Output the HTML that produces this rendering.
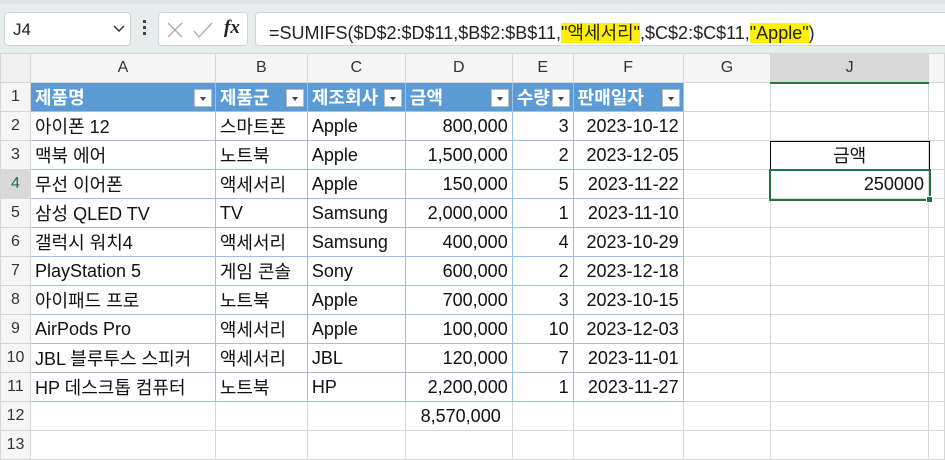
<!DOCTYPE html><html><head><meta charset="utf-8"><style>
*{margin:0;padding:0;box-sizing:border-box}
body{width:945px;height:445px;overflow:hidden;background:#fff;font-family:"Liberation Sans","Noto Sans CJK KR",sans-serif;position:relative}
.top{position:absolute;left:0;top:0;width:945px;height:54px;background:#e7ecec}
.top .strip{position:absolute;left:0;top:0;width:945px;height:4px;background:#dfe3e3}
.box{position:absolute;background:#fff;border:1px solid #d0d4d4;border-radius:4px}
table{position:absolute;left:0;top:53px;border-collapse:collapse;table-layout:fixed}
td{height:29px;border:1px solid #d6d6d6;font-size:18px;padding:0 4px;white-space:nowrap;overflow:hidden;color:#111}
tr.h td{background:#f5f5f5;text-align:center;color:#333;font-size:16px;border-color:#d6d6d6}
td.rh{background:#f5f5f5;text-align:center;color:#333;font-size:16px;padding:0}
td.r{text-align:right}
tr.t1 td.tb{background:#5b9bd5;color:#fff;font-weight:bold;border-color:#9bc2e6;position:relative}
td.tb{border-color:#9bc2e6}
.dd{position:absolute;right:3px;top:6px;width:18px;height:18px;background:#fff;border:1px solid #bbb}
.dd:after{content:"";position:absolute;left:5px;top:7px;border-left:3.5px solid transparent;border-right:3.5px solid transparent;border-top:4px solid #444}
</style></head><body>
<div class="top"><div class="strip"></div>
<div class="box" style="left:4px;top:12px;width:127px;height:34px"><span style="position:absolute;left:8px;top:7px;font-size:17px;color:#222">J4</span>
<svg style="position:absolute;left:108px;top:12px" width="12" height="8"><path d="M1 1 L6 6 L11 1" stroke="#333" stroke-width="1.5" fill="none"/></svg></div>
<div style="position:absolute;left:143px;top:20px;width:3px;height:3px;background:#444;box-shadow:0 6px #444,0 12px #444"></div>
<div class="box" style="left:158px;top:12px;width:90px;height:34px">
<svg style="position:absolute;left:8px;top:9px" width="70" height="18"><path d="M1 1 L15 15 M15 1 L1 15" stroke="#aaa" stroke-width="1.3"/><path d="M27 9 L32 15 L45 1" stroke="#aaa" stroke-width="1.3" fill="none"/></svg>
<span style="position:absolute;left:65px;top:4px;font-family:'Liberation Serif',serif;font-style:italic;font-weight:bold;font-size:19px;color:#222">fx</span></div>
<div class="box" style="left:255px;top:12px;width:700px;height:34px;border-radius:4px 0 0 4px"><span style="position:absolute;left:13px;top:6px;font-size:18px;color:#222;white-space:nowrap">=SUMIFS($D$2:$D$11,$B$2:$B$11,<span style="background:#ffef00">"액세서리"</span>,$C$2:$C$11,<span style="background:#ffef00">"Apple"</span>)</span></div>
</div>
<table>
<colgroup><col style="width:30px"><col style="width:185px"><col style="width:92px"><col style="width:98px"><col style="width:107px"><col style="width:61px"><col style="width:110px"><col style="width:88px"><col style="width:158px"><col style="width:16px"></colgroup>
<tr class="h"><td style="background:#f0f0f0"></td><td>A</td><td>B</td><td>C</td><td>D</td><td>E</td><td>F</td><td>G</td><td style="background:#d9d9d9;border-bottom:2px solid #217346">J</td><td></td></tr>
<tr class="t1"><td class="rh">1</td><td class="tb">제품명<span class="dd"></span></td><td class="tb">제품군<span class="dd"></span></td><td class="tb">제조회사<span class="dd"></span></td><td class="tb">금액<span class="dd"></span></td><td class="tb">수량<span class="dd"></span></td><td class="tb">판매일자<span class="dd"></span></td><td></td><td></td><td></td></tr>
<tr><td class="rh">2</td><td class="tb">아이폰 12</td><td class="tb">스마트폰</td><td class="tb">Apple</td><td class="tb r">800,000</td><td class="tb r">3</td><td class="tb r">2023-10-12</td><td></td><td></td><td></td></tr>
<tr><td class="rh">3</td><td class="tb">맥북 에어</td><td class="tb">노트북</td><td class="tb">Apple</td><td class="tb r">1,500,000</td><td class="tb r">2</td><td class="tb r">2023-12-05</td><td></td><td style="text-align:center">금액</td><td></td></tr>
<tr><td class="rh" style="background:#d9d9d9;color:#217346">4</td><td class="tb">무선 이어폰</td><td class="tb">액세서리</td><td class="tb">Apple</td><td class="tb r">150,000</td><td class="tb r">5</td><td class="tb r">2023-11-22</td><td></td><td class="r">250000</td><td></td></tr>
<tr><td class="rh">5</td><td class="tb">삼성 QLED TV</td><td class="tb">TV</td><td class="tb">Samsung</td><td class="tb r">2,000,000</td><td class="tb r">1</td><td class="tb r">2023-11-10</td><td></td><td></td><td></td></tr>
<tr><td class="rh">6</td><td class="tb">갤럭시 워치4</td><td class="tb">액세서리</td><td class="tb">Samsung</td><td class="tb r">400,000</td><td class="tb r">4</td><td class="tb r">2023-10-29</td><td></td><td></td><td></td></tr>
<tr><td class="rh">7</td><td class="tb">PlayStation 5</td><td class="tb">게임 콘솔</td><td class="tb">Sony</td><td class="tb r">600,000</td><td class="tb r">2</td><td class="tb r">2023-12-18</td><td></td><td></td><td></td></tr>
<tr><td class="rh">8</td><td class="tb">아이패드 프로</td><td class="tb">노트북</td><td class="tb">Apple</td><td class="tb r">700,000</td><td class="tb r">3</td><td class="tb r">2023-10-15</td><td></td><td></td><td></td></tr>
<tr><td class="rh">9</td><td class="tb">AirPods Pro</td><td class="tb">액세서리</td><td class="tb">Apple</td><td class="tb r">100,000</td><td class="tb r">10</td><td class="tb r">2023-12-03</td><td></td><td></td><td></td></tr>
<tr><td class="rh">10</td><td class="tb">JBL 블루투스 스피커</td><td class="tb">액세서리</td><td class="tb">JBL</td><td class="tb r">120,000</td><td class="tb r">7</td><td class="tb r">2023-11-01</td><td></td><td></td><td></td></tr>
<tr><td class="rh">11</td><td class="tb">HP 데스크톱 컴퓨터</td><td class="tb">노트북</td><td class="tb">HP</td><td class="tb r">2,200,000</td><td class="tb r">1</td><td class="tb r">2023-11-27</td><td></td><td></td><td></td></tr>
<tr><td class="rh">12</td><td></td><td></td><td></td><td class="r" style="padding-right:11px">8,570,000</td><td></td><td></td><td></td><td></td><td></td></tr>
<tr><td class="rh">13</td><td></td><td></td><td></td><td></td><td></td><td></td><td></td><td></td><td></td></tr>
</table>
<div style="position:absolute;left:770px;top:141px;width:160px;height:30px;border:1px solid #000"></div>
<div style="position:absolute;left:769px;top:169px;width:162px;height:32px;border:2px solid #217346"></div>
<div style="position:absolute;left:926px;top:196px;width:7px;height:7px;background:#217346;border:1px solid #fff"></div>
</body></html>
